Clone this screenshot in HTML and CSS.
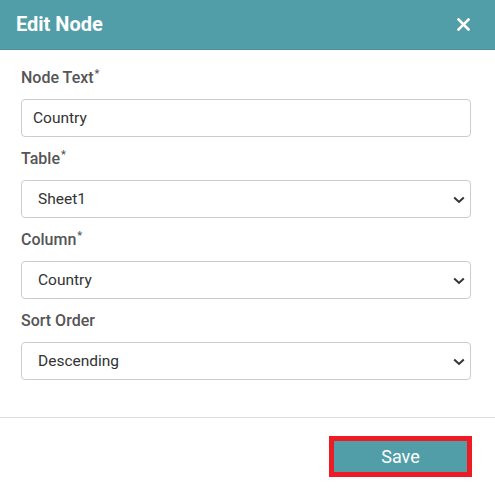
FILE: index.html
```html
<!DOCTYPE html>
<html>
<head>
<meta charset="utf-8">
<link rel="stylesheet" href="styles.css">
</head>
<body>
<div class="modal">
  <div class="modal-header">
    <span class="modal-title">Edit Node</span>
    <span class="close">
      <svg width="13" height="13" viewBox="0 0 13 13"><path d="M1.5 1.5 L11.5 11.5 M11.5 1.5 L1.5 11.5" stroke="#fff" stroke-width="2.6" stroke-linecap="square"/></svg>
    </span>
  </div>
  <div class="modal-body">
    <div class="field">
      <label class="label">Node Text<sup>*</sup></label>
      <input class="control input" type="text" value="Country">
    </div>
    <div class="field">
      <label class="label">Table<sup>*</sup></label>
      <div class="select-wrap">
        <select class="control select"><option>Sheet1</option></select>
        <svg class="chev" width="12" height="8" viewBox="0 0 12 8"><path d="M1.2 1.5 L6 6 L10.8 1.5" fill="none" stroke="#333" stroke-width="2"/></svg>
      </div>
    </div>
    <div class="field">
      <label class="label">Column<sup>*</sup></label>
      <div class="select-wrap">
        <select class="control select"><option>Country</option></select>
        <svg class="chev" width="12" height="8" viewBox="0 0 12 8"><path d="M1.2 1.5 L6 6 L10.8 1.5" fill="none" stroke="#333" stroke-width="2"/></svg>
      </div>
    </div>
    <div class="field">
      <label class="label">Sort Order</label>
      <div class="select-wrap">
        <select class="control select"><option>Descending</option></select>
        <svg class="chev" width="12" height="8" viewBox="0 0 12 8"><path d="M1.2 1.5 L6 6 L10.8 1.5" fill="none" stroke="#333" stroke-width="2"/></svg>
      </div>
    </div>
  </div>
  <div class="modal-footer">
    <button class="save">Save</button>
  </div>
</div>
</body>
</html>
```

FILE: styles.css
```css
* { box-sizing: border-box; }
html, body { margin: 0; padding: 0; background: #fff; }
body { font-family: Roboto, "Liberation Sans", sans-serif; width: 495px; height: 492px; overflow: hidden; }

.modal { display: flex; flex-direction: column; }

.modal-header {
  height: 50px;
  background: #529ea8;
  border-bottom: 1px solid #4a939d;
  display: flex;
  align-items: center;
  justify-content: space-between;
  padding: 0 25px 1px 16px;
}
.modal-title { color: #fff; font-size: 20px; font-weight: 700; line-height: 24px; }
.close { display: flex; width: 13px; height: 13px; }

.modal-body {
  padding: 18px 24px 0 21px;
  height: 368px;
  border-bottom: 1px solid #dedede;
}
.field { margin-bottom: 12px; }
.label {
  display: block;
  font-size: 16px;
  font-weight: 500;
  color: #555;
  line-height: 20px;
  margin-bottom: 11px;
}
.label sup { font-size: 11px; line-height: 0; vertical-align: 6px; margin-left: 1px; }

.control {
  display: block;
  width: 450px;
  height: 38px;
  border: 1px solid #ccc;
  border-radius: 4px;
  background: #fff;
  font-family: Roboto, "Liberation Sans", sans-serif;
  font-size: 15.5px;
  color: #333;
  outline: none;
  margin: 0;
}
.input { padding: 0 11px; }
.select-wrap { position: relative; width: 450px; }
.select { appearance: none; -webkit-appearance: none; padding: 0 30px 0 16px; }
.chev { position: absolute; right: 6px; top: 16px; pointer-events: none; }

.modal-footer {
  display: flex;
  justify-content: flex-end;
  padding: 23px 28px 0 0;
}
.save {
  width: 133px;
  height: 31px;
  background: #529ea8;
  color: #fff;
  border: none;
  font-family: Roboto, "Liberation Sans", sans-serif;
  font-size: 18px;
  line-height: 31px;
  padding: 0;
  outline: 5px solid #ed1c24;
}
```
